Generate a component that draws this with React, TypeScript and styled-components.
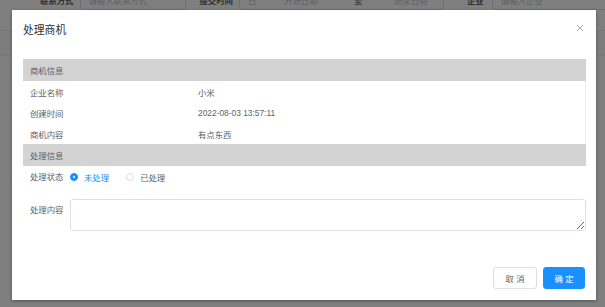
import styled, { createGlobalStyle } from 'styled-components';

const GlobalStyle = createGlobalStyle`
  html, body {
    margin: 0;
    padding: 0;
  }

  body {
    width: 605px;
    height: 307px;
    overflow: hidden;
    background: #fff;
    font-family: "Liberation Sans", "Noto Sans CJK SC", sans-serif;
  }
`;

const PRIMARY = '#1890ff';

/* ---------- page behind the dialog ---------- */

const Page = styled.div`
  position: relative;
  width: 605px;
  height: 307px;
  overflow: hidden;
  background: #fff;
`;

const SearchBar = styled.div`
  height: 20px;
  margin-top: -10px;
  padding-left: 40px;
  display: flex;
  flex-direction: row;
  align-items: center;
`;

const SearchLabel = styled.span<{ $gap: number }>`
  margin-right: ${({ $gap }) => $gap}px;
  font-size: 8.4px;
  font-weight: 700;
  color: #606266;
  white-space: nowrap;
`;

const SearchInput = styled.div<{ $width: number; $after: number }>`
  width: ${({ $width }) => $width}px;
  height: 20px;
  margin-right: ${({ $after }) => $after}px;
  padding: 0 8px;
  box-sizing: border-box;
  display: flex;
  align-items: center;
  gap: 10px;
  border: 1px solid #dcdfe6;
  border-radius: 3px;
  font-size: 8.4px;
  color: #c0c4cc;
  white-space: nowrap;
  flex-shrink: 0;
`;

const RangeSep = styled.span`
  margin: 0 22px 0 26px;
  color: #303133;
`;

const TableTop = styled.div`
  height: 24px;
  margin-top: 20px;
  border-top: 1px solid #ebeef5;
  border-bottom: 1px solid #ebeef5;
  background: #fafafa;
`;

const Mask = styled.div`
  position: absolute;
  inset: 0;
  background: rgba(0, 0, 0, 0.5);
`;

/* ---------- dialog ---------- */

const Dialog = styled.div`
  position: absolute;
  top: 10px;
  left: 12px;
  width: 584px;
  height: 290px;
  background: #fff;
  box-shadow: 0 1px 3px rgba(0, 0, 0, 0.35);
  display: flex;
  flex-direction: column;
`;

const DialogHeader = styled.div`
  position: relative;
  height: 38px;
  padding: 0 11px;
  display: flex;
  align-items: center;
`;

const Title = styled.span`
  font-size: 10.8px;
  color: #303133;
`;

const CloseButton = styled.button`
  position: absolute;
  top: 14px;
  right: 12px;
  width: 8px;
  height: 8px;
  padding: 0;
  border: 0;
  background: none;
  display: flex;
  cursor: pointer;
`;

const DialogBody = styled.div`
  flex: 1;
  padding: 11px 10px 0 11px;
  display: flex;
  flex-direction: column;
`;

const InfoTable = styled.div`
  display: flex;
  flex-direction: column;
  font-size: 8.4px;
  color: #606266;
`;

const SectionRow = styled.div`
  height: 22px;
  padding: 0 7px;
  display: flex;
  align-items: center;
  background: #d3d3d3;
`;

const InfoRow = styled.div`
  height: 21px;
  display: grid;
  grid-template-columns: 168px 1fr;
  align-items: center;
  padding-left: 7px;
  border-right: 1px solid #ebeef5;
`;

const FormRow = styled.div<{ $top: number }>`
  margin-top: ${({ $top }) => $top}px;
  padding-left: 7px;
  display: flex;
  align-items: flex-start;
  font-size: 8.4px;
`;

const FormLabel = styled.label`
  width: 40px;
  flex-shrink: 0;
  line-height: 22px;
  color: #606266;
`;

const RadioGroup = styled.div`
  height: 22px;
  display: flex;
  align-items: center;
  gap: 17px;
`;

const RadioItem = styled.label<{ $checked?: boolean }>`
  display: flex;
  align-items: center;
  gap: 6px;
  color: ${({ $checked }) => ($checked ? PRIMARY : '#606266')};
  cursor: pointer;
`;

const RadioDot = styled.span<{ $checked?: boolean }>`
  width: 8px;
  height: 8px;
  box-sizing: border-box;
  border-radius: 50%;
  border: 1px solid ${({ $checked }) => ($checked ? PRIMARY : '#dcdfe6')};
  background: ${({ $checked }) => ($checked ? PRIMARY : '#fff')};
  display: flex;
  align-items: center;
  justify-content: center;

  &::after {
    content: '';
    width: 2.5px;
    height: 2.5px;
    border-radius: 50%;
    background: #fff;
    display: ${({ $checked }) => ($checked ? 'block' : 'none')};
  }
`;

const TextArea = styled.textarea`
  flex: 1;
  height: 32px;
  box-sizing: border-box;
  margin: 0;
  padding: 3px 6px;
  border: 1px solid #dcdfe6;
  border-radius: 3px;
  font-family: inherit;
  font-size: 8.4px;
  color: #606266;
  outline: none;
`;

const DialogFooter = styled.div`
  padding: 0 11px 11px;
  display: flex;
  justify-content: flex-end;
  gap: 6px;
`;

const Button = styled.button<{ $primary?: boolean }>`
  height: 22px;
  padding: 0;
  box-sizing: border-box;
  border-radius: 3px;
  border: 1px solid ${({ $primary }) => ($primary ? PRIMARY : '#dcdfe6')};
  background: ${({ $primary }) => ($primary ? PRIMARY : '#fff')};
  color: ${({ $primary }) => ($primary ? '#fff' : '#606266')};
  font-family: inherit;
  font-size: 8.4px;
  white-space: pre;
  cursor: pointer;
`;

const CancelButton = styled(Button)`
  width: 44px;
`;

const ConfirmButton = styled(Button)`
  width: 42px;
`;

const info = [
  { label: '企业名称', value: '小米' },
  { label: '创建时间', value: '2022-08-03 13:57:11' },
  { label: '商机内容', value: '有点东西' },
];

function App() {
  return (
    <>
      <GlobalStyle />
      <Page>
        <SearchBar>
          <SearchLabel $gap={6}>联系方式</SearchLabel>
          <SearchInput $width={106} $after={14}>请输入联系方式</SearchInput>
          <SearchLabel $gap={6}>提交时间</SearchLabel>
          <SearchInput $width={205} $after={23}>
            <span>日</span>
            <span style={{ marginLeft: 18 }}>开始日期</span>
            <RangeSep>至</RangeSep>
            <span>结束日期</span>
          </SearchInput>
          <SearchLabel $gap={8}>企业</SearchLabel>
          <SearchInput $width={120} $after={0}>请输入企业</SearchInput>
        </SearchBar>
        <TableTop />
        <Mask />

        <Dialog>
          <DialogHeader>
            <Title>处理商机</Title>
            <CloseButton aria-label="关闭">
              <svg width="8" height="8" viewBox="0 0 8 8">
                <path d="M1 1L7 7M7 1L1 7" stroke="#909399" strokeWidth="0.8" />
              </svg>
            </CloseButton>
          </DialogHeader>

          <DialogBody>
            <InfoTable>
              <SectionRow>商机信息</SectionRow>
              {info.map((row) => (
                <InfoRow key={row.label}>
                  <span>{row.label}</span>
                  <span>{row.value}</span>
                </InfoRow>
              ))}
              <SectionRow>处理信息</SectionRow>
            </InfoTable>

            <FormRow $top={0}>
              <FormLabel>处理状态</FormLabel>
              <RadioGroup>
                <RadioItem $checked>
                  <RadioDot $checked />
                  未处理
                </RadioItem>
                <RadioItem>
                  <RadioDot />
                  已处理
                </RadioItem>
              </RadioGroup>
            </FormRow>

            <FormRow $top={11}>
              <FormLabel>处理内容</FormLabel>
              <TextArea />
            </FormRow>
          </DialogBody>

          <DialogFooter>
            <CancelButton>取 消</CancelButton>
            <ConfirmButton $primary>确 定</ConfirmButton>
          </DialogFooter>
        </Dialog>
      </Page>
    </>
  );
}

export default App;
